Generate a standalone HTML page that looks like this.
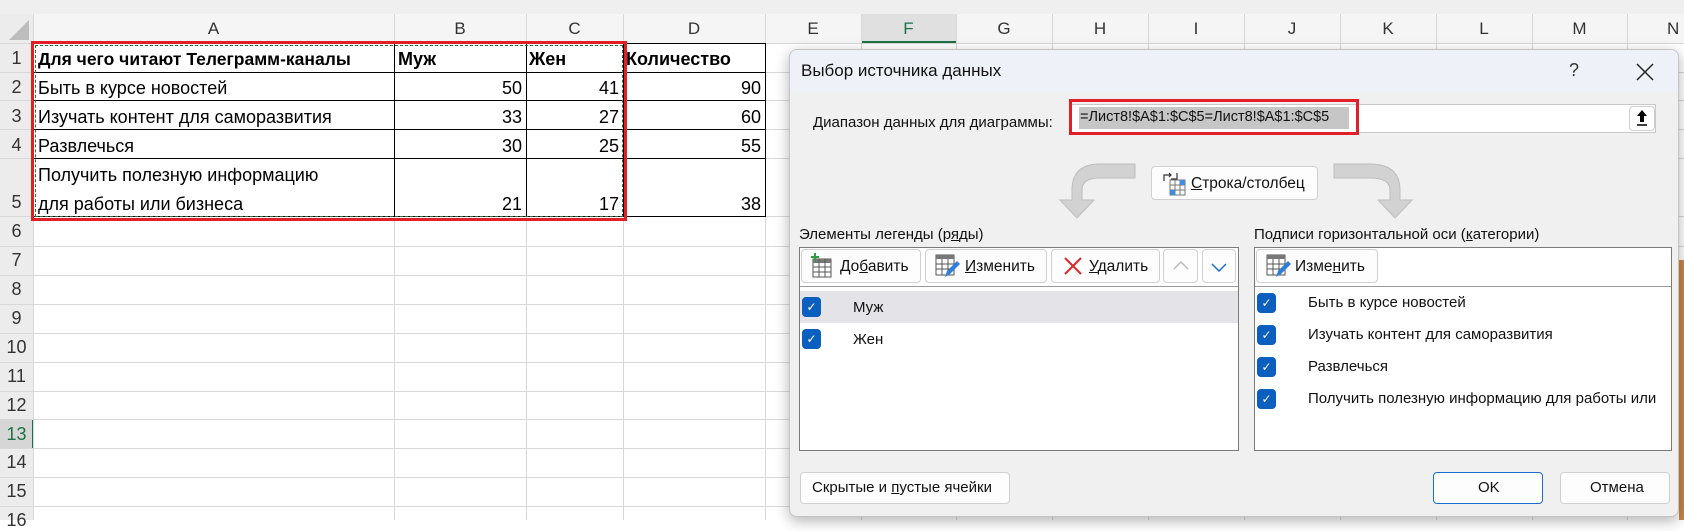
<!DOCTYPE html>
<html><head><meta charset="utf-8"><style>
*{margin:0;padding:0;box-sizing:border-box}
body{width:1684px;height:520px;overflow:hidden;background:#fff;font-family:"Liberation Sans",sans-serif;position:relative;color:#000}
.a{position:absolute}
.vl{position:absolute;top:14px;width:1px;height:506px;background:#d8d8d8}
.hl{position:absolute;left:0;height:1px;width:1684px;background:#d8d8d8}
.ch{position:absolute;top:14px;height:29px;line-height:29px;text-align:center;font-size:17px;color:#333}
.rh{position:absolute;left:0;width:33px;text-align:center;font-size:18px;color:#333}
.c{position:absolute;font-size:18px;white-space:nowrap;line-height:22px}
.r{text-align:right}
.d{font-size:15px;white-space:nowrap;position:absolute;color:#111}
.btn{position:absolute;background:#fdfdfd;border:1px solid #d0d0d0;border-radius:4px}
.cb{position:absolute;width:19px;height:20px;background:#0a5fbf;border-radius:4px;color:#fff;font-size:12px;text-align:center;line-height:20px}
u{text-decoration:underline}
</style></head><body>
<div class="a" style="left:0;top:0;width:1684px;height:14px;background:#efefef"></div>
<div class="a" style="left:0;top:14px;width:1684px;height:29px;background:#f5f5f5"></div>
<div class="a" style="left:0;top:14px;width:34px;height:506px;background:#ececec"></div>
<svg class="a" style="left:8px;top:20px" width="22" height="20"><polygon points="21,0 21,20 1,20" fill="#bdbdbd"/></svg>
<div class="a" style="left:861px;top:14px;width:95px;height:29px;background:#e0e0e0;border-bottom:2px solid #1e7145"></div>
<div class="a" style="left:0;top:419px;width:34px;height:29px;background:#d6d6d6;border-right:2px solid #1e7145"></div>
<div class="vl" style="left:33px"></div><div class="vl" style="left:394px"></div><div class="vl" style="left:526px"></div><div class="vl" style="left:623px"></div><div class="vl" style="left:765px"></div><div class="vl" style="left:861px"></div><div class="vl" style="left:956px"></div><div class="vl" style="left:1052px"></div><div class="vl" style="left:1148px"></div><div class="vl" style="left:1244px"></div><div class="vl" style="left:1340px"></div><div class="vl" style="left:1436px"></div><div class="vl" style="left:1532px"></div><div class="vl" style="left:1627px"></div>
<div class="hl" style="top:43px"></div><div class="hl" style="top:72px"></div><div class="hl" style="top:100px"></div><div class="hl" style="top:129px"></div><div class="hl" style="top:158px"></div><div class="hl" style="top:216px"></div><div class="hl" style="top:246px"></div><div class="hl" style="top:275px"></div><div class="hl" style="top:304px"></div><div class="hl" style="top:333px"></div><div class="hl" style="top:362px"></div><div class="hl" style="top:391px"></div><div class="hl" style="top:419px"></div><div class="hl" style="top:448px"></div><div class="hl" style="top:477px"></div><div class="hl" style="top:506px"></div>
<div class="ch" style="left:33px;width:361px">A</div><div class="ch" style="left:394px;width:132px">B</div><div class="ch" style="left:526px;width:97px">C</div><div class="ch" style="left:623px;width:142px">D</div><div class="ch" style="left:765px;width:96px">E</div><div class="ch" style="left:861px;width:95px;color:#1e7145">F</div><div class="ch" style="left:956px;width:96px">G</div><div class="ch" style="left:1052px;width:96px">H</div><div class="ch" style="left:1148px;width:96px">I</div><div class="ch" style="left:1244px;width:96px">J</div><div class="ch" style="left:1340px;width:96px">K</div><div class="ch" style="left:1436px;width:96px">L</div><div class="ch" style="left:1532px;width:95px">M</div><div class="ch" style="left:1627px;width:57px;text-align:left;padding-left:40px">N</div>
<div class="rh" style="top:48px">1</div><div class="rh" style="top:77px">2</div><div class="rh" style="top:106px">3</div><div class="rh" style="top:135px">4</div><div class="rh" style="top:192px">5</div><div class="rh" style="top:221px">6</div><div class="rh" style="top:250px">7</div><div class="rh" style="top:279px">8</div><div class="rh" style="top:308px">9</div><div class="rh" style="top:337px">10</div><div class="rh" style="top:366px">11</div><div class="rh" style="top:395px">12</div><div class="rh" style="top:424px;color:#1e7145">13</div><div class="rh" style="top:452px">14</div><div class="rh" style="top:481px">15</div><div class="rh" style="top:510px">16</div>
<div class="a" style="left:33px;top:43px;width:733px;height:174px;border:1px solid #000"></div>
<div class="a" style="left:33px;top:72px;width:733px;height:1px;background:#000"></div>
<div class="a" style="left:33px;top:100px;width:733px;height:1px;background:#000"></div>
<div class="a" style="left:33px;top:129px;width:733px;height:1px;background:#000"></div>
<div class="a" style="left:33px;top:158px;width:733px;height:1px;background:#000"></div>
<div class="a" style="left:394px;top:43px;width:1px;height:174px;background:#000"></div>
<div class="a" style="left:526px;top:43px;width:1px;height:174px;background:#000"></div>
<div class="a" style="left:623px;top:43px;width:1px;height:174px;background:#000"></div>
<div class="c" style="left:38px;top:48px;font-weight:bold;font-size:17.5px">Для чего читают Телеграмм-каналы</div>
<div class="c" style="left:398px;top:48px;font-weight:bold">Муж</div>
<div class="c" style="left:529px;top:48px;font-weight:bold">Жен</div>
<div class="c" style="left:626px;top:48px;font-weight:bold">Количество</div>
<div class="c" style="left:38px;top:77px">Быть в курсе новостей</div>
<div class="c" style="left:38px;top:106px">Изучать контент для саморазвития</div>
<div class="c" style="left:38px;top:135px">Развлечься</div>
<div class="c" style="left:38px;top:164px">Получить полезную информацию</div>
<div class="c" style="left:38px;top:193px">для работы или бизнеса</div>
<div class="c r" style="left:400px;width:122px;top:77px">50</div><div class="c r" style="left:530px;width:89px;top:77px">41</div><div class="c r" style="left:630px;width:131px;top:77px">90</div>
<div class="c r" style="left:400px;width:122px;top:106px">33</div><div class="c r" style="left:530px;width:89px;top:106px">27</div><div class="c r" style="left:630px;width:131px;top:106px">60</div>
<div class="c r" style="left:400px;width:122px;top:135px">30</div><div class="c r" style="left:530px;width:89px;top:135px">25</div><div class="c r" style="left:630px;width:131px;top:135px">55</div>
<div class="c r" style="left:400px;width:122px;top:193px">21</div><div class="c r" style="left:530px;width:89px;top:193px">17</div><div class="c r" style="left:630px;width:131px;top:193px">38</div>
<div class="a" style="left:31px;top:41px;width:596px;height:180px;border:3px solid #e01f26"></div>
<div class="a" style="left:35px;top:45px;width:588px;height:172px;border:1px dashed #217346"></div>
<div class="a" style="left:1679px;top:260px;width:5px;height:260px;background:#c8874a"></div>
<div class="a" style="left:789px;top:49px;width:890px;height:468px;background:#f0f0f0;border:1px solid #c4c4c4;border-radius:8px;box-shadow:0 4px 14px rgba(0,0,0,.3);overflow:hidden">
 <div class="a" style="left:0;top:0;width:890px;height:42px;background:#eef2f8"></div>
</div>
<div class="d" style="left:801px;top:61px;font-size:17px">Выбор источника данных</div>
<div class="d" style="left:1569px;top:60px;font-size:18px;color:#333">?</div>
<svg class="a" style="left:1636px;top:63px" width="18" height="18"><path d="M1 1L17 17M17 1L1 17" stroke="#222" stroke-width="1.5"/></svg>
<div class="d" style="left:813px;top:114px"><u>Д</u>иапазон данных для диаграммы:</div>
<div class="a" style="left:1071px;top:104px;width:585px;height:29px;background:#fff;border:1px solid #c8c8c8"></div>
<div class="a" style="left:1079px;top:107px;width:270px;height:22px;background:#c6c6c6"></div>
<div class="d" style="left:1080px;top:109px;font-size:14.5px">=Лист8!$A$1:$C$5=Лист8!$A$1:$C$5</div>
<div class="a" style="left:1069px;top:99px;width:290px;height:36px;border:3px solid #e01f26"></div>
<div class="btn" style="left:1629px;top:106px;width:26px;height:25px"></div>
<svg class="a" style="left:1634px;top:108px" width="16" height="20"><path d="M8 2L3 8H6V14H10V8H13Z" fill="#000"/><path d="M3 17H13" stroke="#000" stroke-width="1.5"/></svg>
<svg class="a" style="left:1050px;top:162px" width="90" height="58"><path d="M85 2H50Q22 2 22 28V38H10L27 56L44 38H32V28Q32 16 50 16H85Z" fill="#d2d2d2" stroke="#bdbdbd"/></svg>
<svg class="a" style="left:1330px;top:162px" width="94" height="58"><path d="M4 2H40Q70 2 70 28V38H82L65 56L48 38H60V28Q60 16 40 16H4Z" fill="#d2d2d2" stroke="#bdbdbd"/></svg>
<div class="btn" style="left:1151px;top:166px;width:167px;height:34px"></div>
<svg class="a" style="left:1162px;top:172px" width="24" height="24"><rect x="8" y="8" width="15" height="15" fill="#fff" stroke="#777"/><path d="M8 13H23M8 18H23M13 8V23M18 8V23" stroke="#777"/><rect x="18" y="8" width="5" height="5" fill="#3a8ee6"/><rect x="8" y="18" width="5" height="5" fill="#3a8ee6"/><path d="M2 9V3H9M7 1L9 3L7 5M15 1V7H9" stroke="#333" fill="none" stroke-width="1.2"/></svg>
<div class="d" style="left:1191px;top:175px;font-size:15.5px"><u>С</u>трока/столбец</div>
<div class="d" style="left:799px;top:226px">Элементы легенды (р<u>я</u>ды)</div>
<div class="d" style="left:1254px;top:226px">Подписи горизонтальной оси (<u>к</u>атегории)</div>
<div class="a" style="left:799px;top:247px;width:440px;height:204px;background:#fff;border:1px solid #7a7a7a"></div>
<div class="a" style="left:800px;top:286px;width:438px;height:1px;background:#9a9a9a"></div>
<div class="btn" style="left:801px;top:249px;width:120px;height:34px"></div>
<div class="btn" style="left:925px;top:249px;width:122px;height:34px"></div>
<div class="btn" style="left:1051px;top:249px;width:109px;height:34px"></div>
<div class="btn" style="left:1163px;top:249px;width:35px;height:34px"></div>
<div class="btn" style="left:1202px;top:249px;width:34px;height:34px"></div>
<svg class="a" style="left:810px;top:253px" width="22" height="26"><rect x="3" y="6" width="18" height="18" fill="#fff" stroke="#555"/><rect x="3" y="6" width="18" height="4" fill="#777"/><path d="M3 14H21M3 19H21M9 6V24M15 6V24" stroke="#555"/><path d="M5 0V8M1 4H9" stroke="#2aa045" stroke-width="2"/></svg>
<div class="d" style="left:840px;top:258px;font-size:15.5px">До<u>б</u>авить</div>
<svg class="a" style="left:935px;top:253px" width="26" height="26"><rect x="1" y="2" width="18" height="20" fill="#fff" stroke="#555"/><rect x="1" y="2" width="18" height="4" fill="#777"/><path d="M1 11H19M1 16H19M7 6V22M13 6V22" stroke="#555"/><path d="M10 24L12 18L22 8L25 11L15 21Z" fill="#2f7fd8"/></svg>
<div class="d" style="left:965px;top:258px;font-size:15.5px"><u>И</u>зменить</div>
<svg class="a" style="left:1063px;top:256px" width="20" height="20"><path d="M2 2L18 18M18 2L2 18" stroke="#e0262b" stroke-width="2"/></svg>
<div class="d" style="left:1089px;top:258px;font-size:15.5px"><u>У</u>далить</div>
<svg class="a" style="left:1173px;top:259px" width="16" height="12"><path d="M1 10L8 3L15 10" stroke="#bbb" fill="none" stroke-width="1.5"/></svg>
<svg class="a" style="left:1211px;top:262px" width="16" height="12"><path d="M1 2L8 9L15 2" stroke="#1a6fc9" fill="none" stroke-width="1.5"/></svg>
<div class="a" style="left:800px;top:291px;width:438px;height:32px;background:#e3e3e8"></div>
<div class="cb" style="left:802px;top:297px">✓</div><div class="d" style="left:853px;top:299px">Муж</div>
<div class="cb" style="left:802px;top:329px">✓</div><div class="d" style="left:853px;top:331px">Жен</div>
<div class="a" style="left:1254px;top:247px;width:418px;height:204px;background:#fff;border:1px solid #7a7a7a"></div>
<div class="a" style="left:1255px;top:286px;width:416px;height:1px;background:#9a9a9a"></div>
<div class="btn" style="left:1256px;top:249px;width:122px;height:34px"></div>
<svg class="a" style="left:1266px;top:253px" width="26" height="26"><rect x="1" y="2" width="18" height="20" fill="#fff" stroke="#555"/><rect x="1" y="2" width="18" height="4" fill="#777"/><path d="M1 11H19M1 16H19M7 6V22M13 6V22" stroke="#555"/><path d="M10 24L12 18L22 8L25 11L15 21Z" fill="#2f7fd8"/></svg>
<div class="d" style="left:1295px;top:258px;font-size:15.5px">Изме<u>н</u>ить</div>
<div class="cb" style="left:1257px;top:293px">✓</div><div class="d" style="left:1308px;top:294px">Быть в курсе новостей</div>
<div class="cb" style="left:1257px;top:325px">✓</div><div class="d" style="left:1308px;top:326px">Изучать контент для саморазвития</div>
<div class="cb" style="left:1257px;top:357px">✓</div><div class="d" style="left:1308px;top:358px">Развлечься</div>
<div class="cb" style="left:1257px;top:389px">✓</div><div class="d" style="left:1308px;top:390px;width:362px;overflow:hidden">Получить полезную информацию для работы или</div>
<div class="btn" style="left:800px;top:472px;width:210px;height:32px"></div>
<div class="d" style="left:812px;top:479px">Скрытые и <u>п</u>устые ячейки</div>
<div class="btn" style="left:1433px;top:472px;width:110px;height:32px;border:1.5px solid #1a6fc9"></div>
<div class="d" style="left:1478px;top:479px">OK</div>
<div class="btn" style="left:1560px;top:472px;width:110px;height:32px"></div>
<div class="d" style="left:1590px;top:479px">Отмена</div>
</body></html>
